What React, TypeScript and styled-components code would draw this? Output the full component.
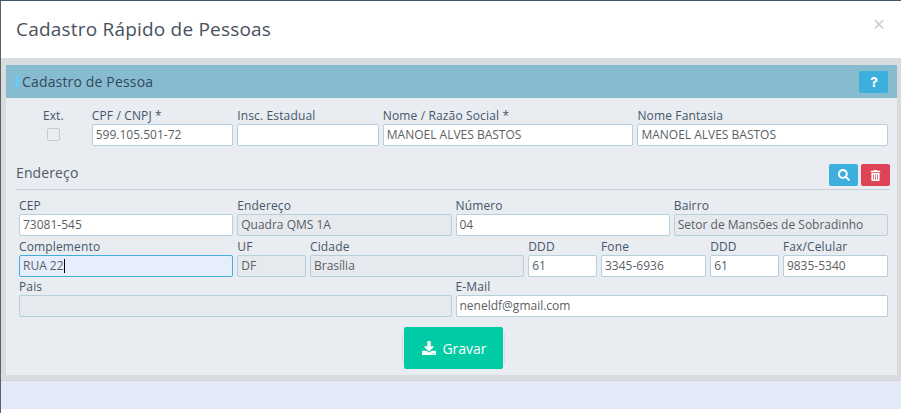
import React from 'react';
import styled, { createGlobalStyle } from 'styled-components';
import { FaDownload, FaQuestion, FaSearch, FaTrashAlt } from 'react-icons/fa';

const GlobalStyle = createGlobalStyle`
  html, body {
    margin: 0;
    padding: 0;
    background: #ffffff;
  }
  body {
    font-family: "Open Sans", "Liberation Sans", sans-serif;
  }
`;

const Page = styled.div`
  width: 901px;
  height: 413px;
  box-sizing: border-box;
  padding: 1px 0 0 1px;
  overflow: hidden;
  background: linear-gradient(#3f5a66, #3f5a66) top / 100% 1px no-repeat,
    linear-gradient(#5a6066, #5a6066) left / 1px 100% no-repeat, #ffffff;
`;

const Modal = styled.div`
  display: flex;
  flex-direction: column;
`;

const ModalHeader = styled.header`
  height: 57px;
  padding: 0 15px;
  background: #ffffff;
  display: flex;
  align-items: center;
  justify-content: space-between;
`;

const ModalTitle = styled.h4`
  margin: -2px 0 0;
  font-size: 19px;
  font-weight: 500;
  letter-spacing: 0.2px;
  color: #47525e;
`;

const CloseButton = styled.span`
  font-size: 21px;
  line-height: 1;
  color: #c9cccf;
  margin: -10px 0 0 0;
  padding-right: 1px;
`;

const ModalBody = styled.div`
  height: 323px;
  box-sizing: border-box;
  padding: 7px 4px 6px 5px;
  background: #d8dcdf;
  border-bottom: 1px solid #cdd3de;
`;

const Panel = styled.section`
  height: 310px;
  background: #e9ecf1;
`;

const PanelHead = styled.div`
  height: 33px;
  box-sizing: border-box;
  padding: 0 9px 0 9px;
  background: #87bbd0;
  display: flex;
  align-items: center;
  justify-content: space-between;
`;

const PanelTitle = styled.h5`
  margin: -1px 0 0;
  font-size: 14px;
  font-weight: 500;
  letter-spacing: 0.16px;
  color: #34495e;
  display: flex;
  align-items: center;
  gap: 3px;

  &::before {
    content: '';
    flex: none;
    width: 4px;
    height: 12px;
    background: #66ccf5;
  }
`;

const PanelContent = styled.div`
  padding: 8px 9px 0 13px;
`;

const FormGrid = styled.div<{ $top?: number }>`
  display: grid;
  grid-template-columns: repeat(24, 1fr);
  column-gap: 4px;
  margin-top: ${({ $top }) => $top ?? 0}px;
`;

const Cell = styled.div<{ $span: number; $center?: boolean }>`
  grid-column: span ${({ $span }) => $span};
  min-width: 0;
  display: flex;
  flex-direction: column;
  align-items: ${({ $center }) => ($center ? 'center' : 'stretch')};
`;

const Label = styled.label`
  height: 18px;
  line-height: 20px;
  font-size: 12px;
  font-weight: 500;
  letter-spacing: 0.14px;
  color: #45566b;
  white-space: nowrap;
`;

const Input = styled.div<{ $disabled?: boolean; $focused?: boolean }>`
  height: 22px;
  box-sizing: border-box;
  padding: 0 3px;
  border: 1px solid ${({ $focused }) => ($focused ? '#3fb0dc' : '#b4d0dc')};
  border-radius: 2px;
  background: ${({ $disabled, $focused }) => ($focused ? '#e6eefc' : $disabled ? '#e6e9ed' : '#ffffff')};
  color: #5a5f66;
  font-size: 12px;
  line-height: 20px;
  white-space: nowrap;
  overflow: hidden;
`;

const Caret = styled.span`
  display: inline-block;
  width: 1px;
  height: 14px;
  background: #000000;
  vertical-align: -3px;
`;

const CheckBox = styled.span`
  width: 13px;
  height: 13px;
  margin-top: 4px;
  border: 1px solid #c6cbd0;
  border-radius: 2px;
  box-sizing: border-box;
  background: #e9ecf1;
`;

const SectionHead = styled.div`
  margin: 18px -2px 0 -3px;
  height: 26px;
  box-sizing: border-box;
  border-bottom: 1px solid #ccd1d9;
  display: flex;
  align-items: flex-start;
  justify-content: space-between;
`;

const SectionTitle = styled.h5`
  margin: -1px 0 0;
  font-size: 14px;
  line-height: 19px;
  font-weight: 500;
  letter-spacing: 0.12px;
  color: #4f5b68;
`;

const IconGroup = styled.div`
  display: flex;
  gap: 3px;
`;

const IconButton = styled.button<{ $tone: 'info' | 'danger' }>`
  width: 29px;
  height: 22px;
  padding: 0;
  border: none;
  border-radius: 2px;
  background: ${({ $tone }) => ($tone === 'info' ? '#3dafdc' : '#de4356')};
  color: #ffffff;
  font-size: 12px;
  display: flex;
  align-items: center;
  justify-content: center;
`;

const Actions = styled.div`
  margin-top: 10px;
  display: flex;
  align-items: center;
  justify-content: center;
  gap: 1px;
`;

const Divider = styled.span`
  width: 1px;
  height: 29px;
  background: #d3dbe3;
`;

const SaveButton = styled.button`
  width: 99px;
  height: 42px;
  padding: 0 0 0 2px;
  border: none;
  border-radius: 2px;
  background: #00cba5;
  color: #ffffff;
  font-family: inherit;
  font-size: 14px;
  font-weight: 500;
  display: flex;
  align-items: center;
  justify-content: center;
  gap: 6px;
`;

const ModalFooter = styled.div`
  height: 28px;
  background: #e3e9f7;
`;

type FieldProps = {
  label: string;
  span: number;
  value?: string;
  disabled?: boolean;
  focused?: boolean;
};

const Field: React.FC<FieldProps> = ({ label, span, value, disabled, focused }) => (
  <Cell $span={span}>
    <Label>{label}</Label>
    <Input $disabled={disabled} $focused={focused}>
      {value}
      {focused && <Caret />}
    </Input>
  </Cell>
);

const App: React.FC = () => (
  <Page>
    <GlobalStyle />
    <Modal>
      <ModalHeader>
        <ModalTitle>Cadastro Rápido de Pessoas</ModalTitle>
        <CloseButton>×</CloseButton>
      </ModalHeader>
      <ModalBody>
        <Panel>
          <PanelHead>
            <PanelTitle>Cadastro de Pessoa</PanelTitle>
            <IconButton $tone="info"><FaQuestion size={10} /></IconButton>
          </PanelHead>
          <PanelContent>
            <FormGrid>
              <Cell $span={2} $center>
                <Label>Ext.</Label>
                <CheckBox />
              </Cell>
              <Field span={4} label="CPF / CNPJ *" value="599.105.501-72" />
              <Field span={4} label="Insc. Estadual" />
              <Field span={7} label="Nome / Razão Social *" value="MANOEL ALVES BASTOS" />
              <Field span={7} label="Nome Fantasia" value="MANOEL ALVES BASTOS" />
            </FormGrid>
            <SectionHead>
              <SectionTitle>Endereço</SectionTitle>
              <IconGroup>
                <IconButton $tone="info"><FaSearch size={12} /></IconButton>
                <IconButton $tone="danger"><FaTrashAlt size={11} /></IconButton>
              </IconGroup>
            </SectionHead>
            <FormGrid $top={6}>
              <Field span={6} label="CEP" value="73081-545" />
              <Field span={6} label="Endereço" value="Quadra QMS 1A" disabled />
              <Field span={6} label="Número" value="04" />
              <Field span={6} label="Bairro" value="Setor de Mansões de Sobradinho" disabled />
            </FormGrid>
            <FormGrid $top={1}>
              <Field span={6} label="Complemento" value="RUA 22" focused />
              <Field span={2} label="UF" value="DF" disabled />
              <Field span={6} label="Cidade" value="Brasília" disabled />
              <Field span={2} label="DDD" value="61" />
              <Field span={3} label="Fone" value="3345-6936" />
              <Field span={2} label="DDD" value="61" />
              <Field span={3} label="Fax/Celular" value="9835-5340" />
            </FormGrid>
            <FormGrid>
              <Field span={12} label="Pais" disabled />
              <Field span={12} label="E-Mail" value="neneldf@gmail.com" />
            </FormGrid>
            <Actions>
              <Divider />
              <SaveButton><FaDownload size={14} />Gravar</SaveButton>
              <Divider />
            </Actions>
          </PanelContent>
        </Panel>
      </ModalBody>
      <ModalFooter />
    </Modal>
  </Page>
);

export default App;
